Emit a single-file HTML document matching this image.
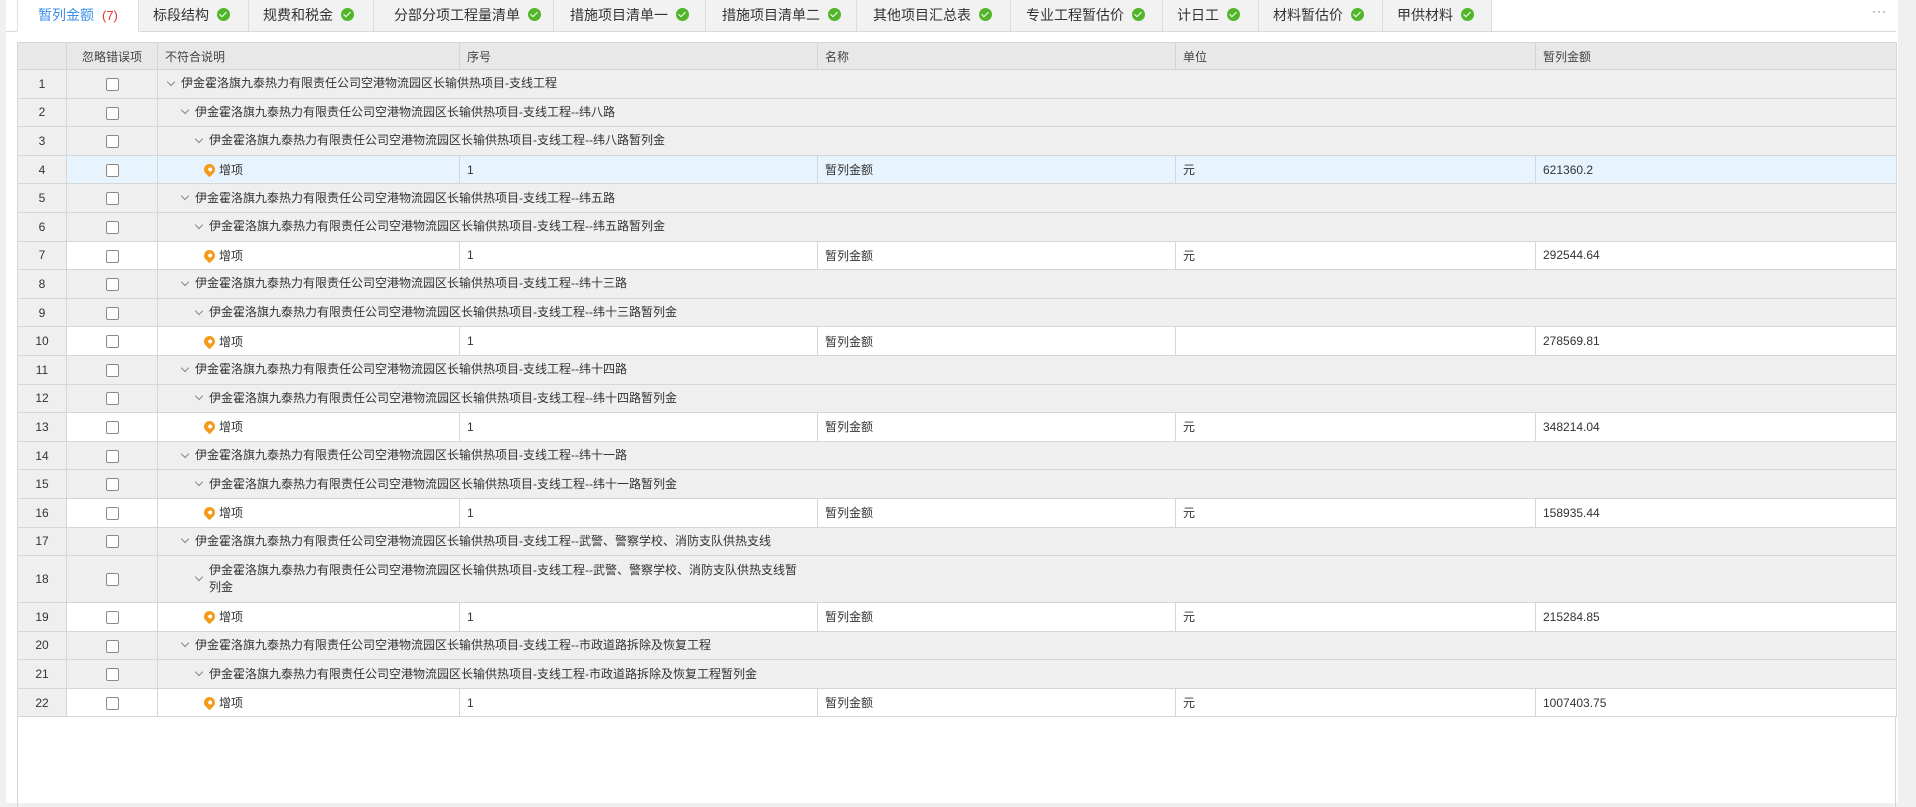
<!DOCTYPE html>
<html><head><meta charset="utf-8">
<style>
*{box-sizing:border-box;margin:0;padding:0}
body{width:1916px;height:803px;overflow:hidden;background:#f0f0f0;font-family:"Liberation Sans","Noto Sans CJK SC",sans-serif;color:#333;position:relative}
.panel{position:absolute;left:6px;top:0;width:1892px;height:803px;background:#fff}
.tabs{position:absolute;left:0;top:0;height:32px;width:1890px;border-bottom:1px solid #d9d9d9}
.tab{position:absolute;top:0;height:32px;background:#f2f2f2;border-right:1px solid #dcdcdc;border-bottom:1px solid #d9d9d9;font-size:14px;line-height:30px;color:#333;padding-left:14px;white-space:nowrap}
.tab.act{background:#fff;color:#3c8fe8;border-bottom:1px solid #fff;border-left:1px solid #e0e0e0}
.tab .n{color:#e0352b;margin-left:8px;font-size:13px}
.ck{display:inline-block;width:13px;height:13px;border-radius:50%;background:#52b52a;vertical-align:-1px;margin-left:8px;position:relative}
.ck:after{content:"";position:absolute;left:4px;top:2px;width:3px;height:6px;border:solid #fff;border-width:0 1.5px 1.5px 0;transform:rotate(45deg)}
.more{position:absolute;left:1866px;top:4px;font-size:12px;color:#666;letter-spacing:1px}
table{position:absolute;left:11px;top:42px;width:1879px;border-collapse:collapse;font-size:12px;table-layout:fixed}
td,th{border:1px solid #d6d6d6;height:28.6px;padding:0 7px;font-weight:normal;text-align:left;white-space:nowrap;overflow:hidden}
th{background:#e8e8e8;height:27px;color:#444}
td.no{background:#efefef;text-align:center;padding:0}
th.no{padding:0}
td.cb{text-align:center;padding:0}
.box{display:inline-block;width:13px;height:13px;border:1px solid #8a8a8a;border-radius:2px;background:#fff;vertical-align:middle}
tr.g td{background:#efefef}
tr.g td.txt{border-left:1px solid #d6d6d6}
tr.sel td{background:#e8f4fd}
tr.sel td.no{background:#efefef}
.gi{display:flex;align-items:center;white-space:normal;line-height:17px}
.chev{display:inline-block;width:6px;height:6px;border:solid #888;border-width:0 1px 1px 0;transform:rotate(45deg);margin-right:7px;margin-top:-4px;flex:none}
.pin{display:inline-block;width:11px;height:11px;background:#f49b1c;border-radius:50% 50% 50% 0;transform:rotate(-45deg);margin-right:4px;vertical-align:-1px;position:relative}
.pin:after{content:"";position:absolute;left:3.5px;top:3.5px;width:4px;height:4px;border-radius:50%;background:#fff}
.bot{position:absolute;left:11px;top:717px;width:1879px;height:90px;border-left:1px solid #d6d6d6;border-right:1px solid #d6d6d6}
</style></head><body>
<div class="panel">
<div class="tabs">
<div class="tab act" style="left:11px;width:122px;padding-left:20px">暂列金额<span class="n">(7)</span></div>
<div class="tab" style="left:133px;width:110px">标段结构<span class="ck"></span></div>
<div class="tab" style="left:243px;width:125px">规费和税金<span class="ck"></span></div>
<div class="tab" style="left:368px;width:180px;padding-left:20px">分部分项工程量清单<span class="ck"></span></div>
<div class="tab" style="left:548px;width:152px;padding-left:16px">措施项目清单一<span class="ck"></span></div>
<div class="tab" style="left:700px;width:151px;padding-left:16px">措施项目清单二<span class="ck"></span></div>
<div class="tab" style="left:851px;width:154px;padding-left:16px">其他项目汇总表<span class="ck"></span></div>
<div class="tab" style="left:1005px;width:152px;padding-left:15px">专业工程暂估价<span class="ck"></span></div>
<div class="tab" style="left:1157px;width:96px">计日工<span class="ck"></span></div>
<div class="tab" style="left:1253px;width:124px">材料暂估价<span class="ck"></span></div>
<div class="tab" style="left:1377px;width:109px">甲供材料<span class="ck"></span></div>
<div class="more">···</div>
</div>
<table>
<colgroup><col style="width:49px"><col style="width:91px"><col style="width:302px"><col style="width:358px"><col style="width:358px"><col style="width:360px"><col style="width:361px"></colgroup>
<tr><th class="no"></th><th style="text-align:center">忽略错误项</th><th>不符合说明</th><th>序号</th><th>名称</th><th>单位</th><th>暂列金额</th></tr>
<tr class="g"><td class="no">1</td><td class="cb"><span class="box"></span></td><td class="txt" colspan="5"><div class="gi" style="padding-left:3px"><span class="chev"></span>伊金霍洛旗九泰热力有限责任公司空港物流园区长输供热项目-支线工程</div></td></tr>
<tr class="g"><td class="no">2</td><td class="cb"><span class="box"></span></td><td class="txt" colspan="5"><div class="gi" style="padding-left:17px"><span class="chev"></span>伊金霍洛旗九泰热力有限责任公司空港物流园区长输供热项目-支线工程--纬八路</div></td></tr>
<tr class="g"><td class="no">3</td><td class="cb"><span class="box"></span></td><td class="txt" colspan="5"><div class="gi" style="padding-left:31px"><span class="chev"></span>伊金霍洛旗九泰热力有限责任公司空港物流园区长输供热项目-支线工程--纬八路暂列金</div></td></tr>
<tr class="sel"><td class="no">4</td><td class="cb"><span class="box"></span></td><td style="padding-left:46px"><span class="pin"></span>增项</td><td>1</td><td>暂列金额</td><td>元</td><td>621360.2</td></tr>
<tr class="g"><td class="no">5</td><td class="cb"><span class="box"></span></td><td class="txt" colspan="5"><div class="gi" style="padding-left:17px"><span class="chev"></span>伊金霍洛旗九泰热力有限责任公司空港物流园区长输供热项目-支线工程--纬五路</div></td></tr>
<tr class="g"><td class="no">6</td><td class="cb"><span class="box"></span></td><td class="txt" colspan="5"><div class="gi" style="padding-left:31px"><span class="chev"></span>伊金霍洛旗九泰热力有限责任公司空港物流园区长输供热项目-支线工程--纬五路暂列金</div></td></tr>
<tr><td class="no">7</td><td class="cb"><span class="box"></span></td><td style="padding-left:46px"><span class="pin"></span>增项</td><td>1</td><td>暂列金额</td><td>元</td><td>292544.64</td></tr>
<tr class="g"><td class="no">8</td><td class="cb"><span class="box"></span></td><td class="txt" colspan="5"><div class="gi" style="padding-left:17px"><span class="chev"></span>伊金霍洛旗九泰热力有限责任公司空港物流园区长输供热项目-支线工程--纬十三路</div></td></tr>
<tr class="g"><td class="no">9</td><td class="cb"><span class="box"></span></td><td class="txt" colspan="5"><div class="gi" style="padding-left:31px"><span class="chev"></span>伊金霍洛旗九泰热力有限责任公司空港物流园区长输供热项目-支线工程--纬十三路暂列金</div></td></tr>
<tr><td class="no">10</td><td class="cb"><span class="box"></span></td><td style="padding-left:46px"><span class="pin"></span>增项</td><td>1</td><td>暂列金额</td><td></td><td>278569.81</td></tr>
<tr class="g"><td class="no">11</td><td class="cb"><span class="box"></span></td><td class="txt" colspan="5"><div class="gi" style="padding-left:17px"><span class="chev"></span>伊金霍洛旗九泰热力有限责任公司空港物流园区长输供热项目-支线工程--纬十四路</div></td></tr>
<tr class="g"><td class="no">12</td><td class="cb"><span class="box"></span></td><td class="txt" colspan="5"><div class="gi" style="padding-left:31px"><span class="chev"></span>伊金霍洛旗九泰热力有限责任公司空港物流园区长输供热项目-支线工程--纬十四路暂列金</div></td></tr>
<tr><td class="no">13</td><td class="cb"><span class="box"></span></td><td style="padding-left:46px"><span class="pin"></span>增项</td><td>1</td><td>暂列金额</td><td>元</td><td>348214.04</td></tr>
<tr class="g"><td class="no">14</td><td class="cb"><span class="box"></span></td><td class="txt" colspan="5"><div class="gi" style="padding-left:17px"><span class="chev"></span>伊金霍洛旗九泰热力有限责任公司空港物流园区长输供热项目-支线工程--纬十一路</div></td></tr>
<tr class="g"><td class="no">15</td><td class="cb"><span class="box"></span></td><td class="txt" colspan="5"><div class="gi" style="padding-left:31px"><span class="chev"></span>伊金霍洛旗九泰热力有限责任公司空港物流园区长输供热项目-支线工程--纬十一路暂列金</div></td></tr>
<tr><td class="no">16</td><td class="cb"><span class="box"></span></td><td style="padding-left:46px"><span class="pin"></span>增项</td><td>1</td><td>暂列金额</td><td>元</td><td>158935.44</td></tr>
<tr class="g"><td class="no">17</td><td class="cb"><span class="box"></span></td><td class="txt" colspan="5"><div class="gi" style="padding-left:17px"><span class="chev"></span>伊金霍洛旗九泰热力有限责任公司空港物流园区长输供热项目-支线工程--武警、警察学校、消防支队供热支线</div></td></tr>
<tr class="g"><td class="no" style="height:47px">18</td><td class="cb"><span class="box"></span></td><td class="txt" colspan="5"><div class="gi" style="padding-left:31px"><span class="chev"></span><span style="max-width:596px">伊金霍洛旗九泰热力有限责任公司空港物流园区长输供热项目-支线工程--武警、警察学校、消防支队供热支线暂列金</span></div></td></tr>
<tr><td class="no">19</td><td class="cb"><span class="box"></span></td><td style="padding-left:46px"><span class="pin"></span>增项</td><td>1</td><td>暂列金额</td><td>元</td><td>215284.85</td></tr>
<tr class="g"><td class="no">20</td><td class="cb"><span class="box"></span></td><td class="txt" colspan="5"><div class="gi" style="padding-left:17px"><span class="chev"></span>伊金霍洛旗九泰热力有限责任公司空港物流园区长输供热项目-支线工程--市政道路拆除及恢复工程</div></td></tr>
<tr class="g"><td class="no">21</td><td class="cb"><span class="box"></span></td><td class="txt" colspan="5"><div class="gi" style="padding-left:31px"><span class="chev"></span>伊金霍洛旗九泰热力有限责任公司空港物流园区长输供热项目-支线工程-市政道路拆除及恢复工程暂列金</div></td></tr>
<tr><td class="no">22</td><td class="cb"><span class="box"></span></td><td style="padding-left:46px"><span class="pin"></span>增项</td><td>1</td><td>暂列金额</td><td>元</td><td>1007403.75</td></tr>
</table>
<div class="bot"></div>
</div>
</body></html>
